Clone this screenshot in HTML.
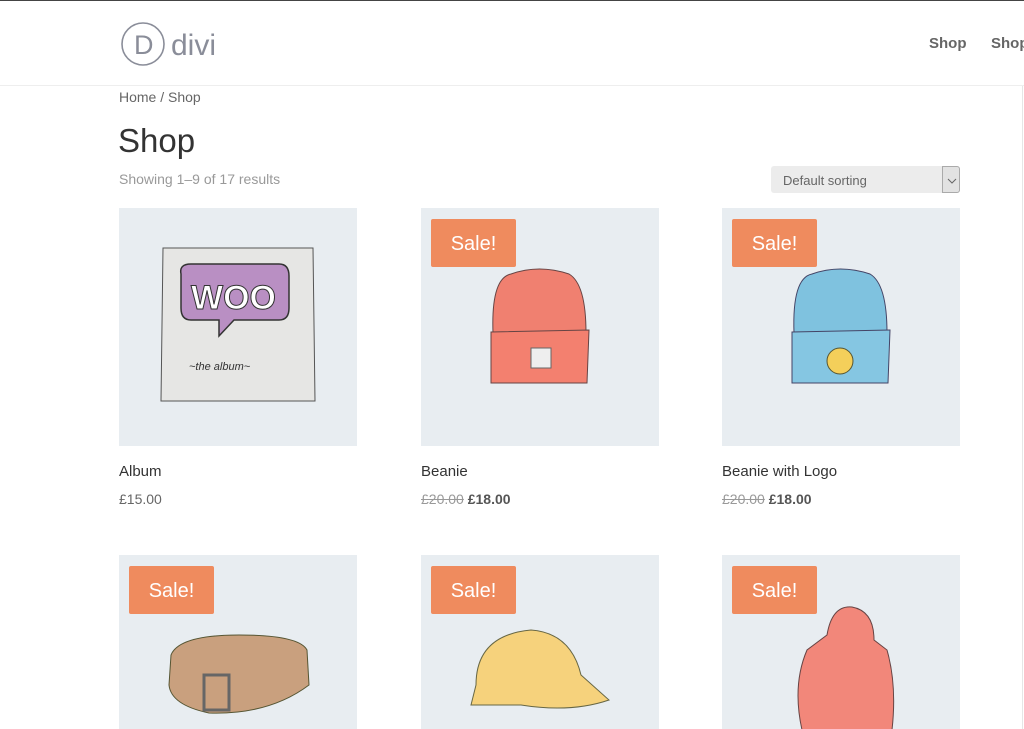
<!DOCTYPE html>
<html><head><meta charset="utf-8"><style>
*{margin:0;padding:0;box-sizing:border-box}
html,body{width:1024px;height:729px;overflow:hidden}
body{background:#fff;font-family:"Liberation Sans",sans-serif;position:relative;color:#333}
.topline{position:absolute;left:0;top:0;width:1024px;height:1px;background:#444}
.rline{position:absolute;left:1022px;top:86px;width:1px;height:643px;background:#e6e6e6}
header{position:absolute;left:0;top:1px;width:1024px;height:85px;border-bottom:1px solid #eee}
.nav{position:absolute;top:34px;font-size:15px;font-weight:bold;color:#666}
.crumb{position:absolute;left:119px;top:89px;font-size:14px;color:#666}
h1{position:absolute;left:118px;top:122px;font-size:33px;font-weight:normal;color:#333}
.count{position:absolute;left:119px;top:171px;font-size:14px;color:#999}
.sort{position:absolute;left:771px;top:166px;width:189px;height:27px;background:#ececec;border-radius:3px;font-size:13px;color:#666;padding:7px 12px}
.sort .arr{position:absolute;right:0;top:0;width:18px;height:27px;border:1px solid #aaa;border-radius:0 3px 3px 0;background:#e2e2e2}
.card{position:absolute;width:238px}
.img{width:238px;height:238px;background:#e8edf1;position:relative;overflow:hidden}
.sale{position:absolute;left:10px;top:11px;width:85px;height:48px;background:#ef8b5e;color:#fff;font-size:20px;text-align:center;line-height:50px;border-radius:2px}
.name{position:absolute;top:255px;left:0;font-size:15px;color:#333}
.price{position:absolute;top:283px;left:0;font-size:14px;color:#666}
.price s{color:#999}
.price b{color:#555}
svg{position:absolute;left:0;top:0}
</style></head><body>
<div class="topline"></div>
<header>
<svg width="120" height="60" style="left:120px;top:17px"><circle cx="23" cy="26" r="21" fill="none" stroke="#8a8d99" stroke-width="1.6"/><text x="14" y="36" font-family="Liberation Sans" font-size="27" fill="#8a8d99">D</text><text x="51" y="37" font-family="Liberation Sans" font-size="30" fill="#8a8d99">divi</text></svg>
<div class="nav" style="left:929px">Shop</div>
<div class="nav" style="left:991px">Shop</div>
</header>
<div class="rline"></div>
<div class="crumb">Home / Shop</div>
<h1>Shop</h1>
<div class="count">Showing 1–9 of 17 results</div>
<div class="sort">Default sorting<div class="arr"><svg width="18" height="27"><path d="M5 12l4 4 4-4" fill="none" stroke="#666"/></svg></div></div>

<div class="card" style="left:119px;top:208px"><div class="img"><svg width="238" height="238"><path d="M44 40L194 40 196 193 42 193Z" fill="#e6e6e4" stroke="#555"/><path d="M62 66Q60 56 72 56L160 56Q170 56 170 68L170 100Q170 112 160 112L115 112 100 128 100 112 72 112Q62 112 62 100Z" fill="#b98fc3" stroke="#333" stroke-width="1.5"/><text x="72" y="101" font-family="Liberation Sans" font-weight="bold" font-size="34" fill="#fff" stroke="#333">WOO</text><text x="70" y="162" font-size="11" font-style="italic" fill="#333">~the    album~</text></svg></div><div class="name">Album</div><div class="price">£15.00</div></div>

<div class="card" style="left:421px;top:208px"><div class="img"><svg width="238" height="238"><path d="M72 125Q70 70 90 66Q118 56 148 66Q165 76 165 125Z" fill="#f08070" stroke="#644" /><path d="M70 124L168 122 166 175 70 175Z" fill="#f3806f" stroke="#644"/><rect x="110" y="140" width="20" height="20" fill="#eee" stroke="#666"/></svg><div class="sale">Sale!</div></div><div class="name">Beanie</div><div class="price"><s>£20.00</s> <b>£18.00</b></div></div>

<div class="card" style="left:722px;top:208px"><div class="img"><svg width="238" height="238"><path d="M72 125Q70 70 90 66Q118 56 148 66Q165 76 165 125Z" fill="#7fc2df" stroke="#446"/><path d="M70 124L168 122 166 175 70 175Z" fill="#85c6e2" stroke="#446"/><circle cx="118" cy="153" r="13" fill="#f4cf5a" stroke="#553"/></svg><div class="sale">Sale!</div></div><div class="name">Beanie with Logo</div><div class="price"><s>£20.00</s> <b>£18.00</b></div></div>

<div class="card" style="left:119px;top:555px"><div class="img"><svg width="238" height="238"><path d="M52 100Q60 80 120 80Q180 80 188 95L190 130Q150 160 90 158Q52 150 50 130Z" fill="#c9a07e" stroke="#553"/><rect x="85" y="120" width="25" height="35" fill="none" stroke="#666" stroke-width="3"/></svg><div class="sale">Sale!</div></div></div>

<div class="card" style="left:421px;top:555px"><div class="img"><svg width="238" height="238"><path d="M55 130Q55 80 110 75Q150 78 160 120L188 145Q150 158 100 150L50 150Z" fill="#f6d27c" stroke="#664"/></svg><div class="sale">Sale!</div></div></div>

<div class="card" style="left:722px;top:555px"><div class="img"><svg width="238" height="238"><path d="M105 80Q110 50 130 52Q152 56 152 85L165 95Q175 130 170 175L80 175Q70 130 85 95Z" fill="#f2877a" stroke="#644"/></svg><div class="sale">Sale!</div></div></div>
</body></html>
